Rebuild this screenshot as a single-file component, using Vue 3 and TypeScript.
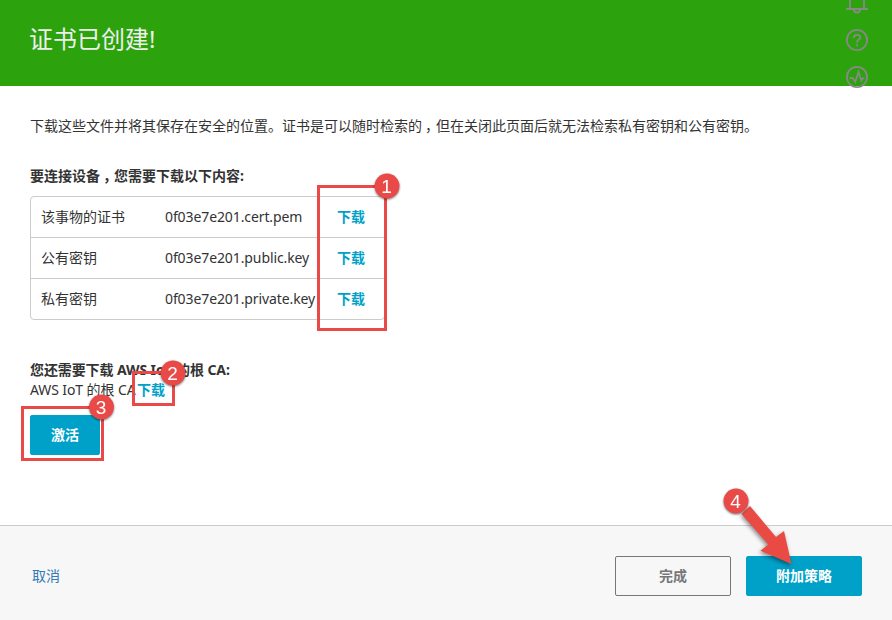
<script setup lang="ts">
interface CertFile {
  label: string
  name: string
}
interface Marker {
  n: number
  x: number
  y: number
}

const files: CertFile[] = [
  { label: '该事物的证书', name: '0f03e7e201.cert.pem' },
  { label: '公有密钥', name: '0f03e7e201.public.key' },
  { label: '私有密钥', name: '0f03e7e201.private.key' },
]

const markers: Marker[] = [
  { n: 1, x: 387, y: 186 },
  { n: 2, x: 173, y: 373 },
  { n: 3, x: 101.5, y: 407 },
  { n: 4, x: 736, y: 501 },
]
</script>

<template>
  <div class="page">
    <header class="banner">
      <h1>证书已创建!</h1>
    </header>

    <main class="content">
      <p class="intro">下载这些文件并将其保存在安全的位置。证书是可以随时检索的<span class="comma">，</span>但在关闭此页面后就无法检索私有密钥和公有密钥。</p>
      <h2 class="heading">要连接设备<span class="comma">，</span>您需要下载以下内容:</h2>
      <div class="files">
        <div v-for="file in files" :key="file.name" class="row">
          <span>{{ file.label }}</span>
          <span class="name">{{ file.name }}</span>
          <a class="link">下载</a>
        </div>
      </div>
      <h2 class="heading root-heading">您还需要下载 AWS IoT 的根 CA:</h2>
      <div class="root-line"><span class="root-name">AWS IoT 的根 CA</span><a class="link">下载</a></div>
      <button class="btn primary activate">激活</button>
    </main>

    <footer class="footer">
      <a class="cancel">取消</a>
      <button class="btn outline">完成</button>
      <button class="btn primary">附加策略</button>
    </footer>

    <svg class="side-icons" width="24" height="90" viewBox="0 0 24 90" fill="none" stroke="#888" stroke-width="1.8">
      <path d="M5 0V8.5M19 0V8.5M1 9H23M9 9.5Q9 12.5 12 12.5Q15 12.5 15 9.5" />
      <circle cx="12" cy="40" r="10.1" />
      <path d="M8.7 38Q8.7 34.9 12 34.9Q15.3 34.9 15.3 37.4Q15.3 38.8 13.6 39.8Q12 40.8 12 42.8M12 44.2V46.2" />
      <circle cx="12" cy="77" r="10.1" />
      <path d="M4.6 78H7.6L10.3 82L13.5 72L16.3 80.5L17.5 78.3H19.5" />
    </svg>

    <svg class="notes" width="892" height="620" viewBox="0 0 892 620">
      <g class="frames">
        <rect x="318.5" y="186.5" width="67" height="143" />
        <rect x="133.5" y="372.5" width="40" height="32" />
        <rect x="22.5" y="407.5" width="80" height="52" />
      </g>
      <path class="arrow" d="M741.5 514L750 506L776 537L784 531L791.5 564L760.5 550.7L768.3 544.5Z" />
      <g v-for="m in markers" :key="m.n" class="marker">
        <circle :cx="m.x" :cy="m.y" r="12.4" />
        <text :x="m.x - 0.5" :y="m.y + 6.5">{{ m.n }}</text>
      </g>
    </svg>
  </div>
</template>

<style>
body {
  margin: 0;
}
</style>

<style scoped>
.page {
  position: relative;
  display: flex;
  flex-direction: column;
  width: 892px;
  height: 620px;
  overflow: hidden;
  background: #fff;
  color: #333;
  font: 14px/20px 'Noto Sans', 'Noto Sans CJK SC', sans-serif;
}
.banner {
  height: 86px;
  box-sizing: border-box;
  padding: 24px 29px;
  background: #2ca20c;
}
h1 {
  margin: 0;
  color: #eee;
  font-size: 24px;
  font-weight: 400;
  line-height: 30px;
}
.content {
  flex: 1;
  padding: 30px 30px 0;
}
.intro {
  margin: 0 0 30px;
  white-space: nowrap;
}
.comma {
  display: inline-block;
  width: 14px;
  box-sizing: border-box;
  padding-left: 3px;
  line-height: 1;
}
.heading {
  margin: 0;
  font-size: 14px;
  font-weight: 700;
  line-height: 20px;
}
.files {
  width: 353px;
  margin-top: 10px;
  border: 1px solid #ccc;
  border-radius: 4px;
}
.row {
  display: grid;
  grid-template-columns: 124px 172px auto;
  height: 40px;
  padding-left: 10px;
  line-height: 40px;
  white-space: nowrap;
}
.row + .row {
  border-top: 1px solid #ccc;
}
.name {
  letter-spacing: -0.1px;
}
.link {
  color: #00a1c9;
  font-weight: 700;
}
.root-heading {
  margin-top: 40px;
  letter-spacing: -0.1px;
}
.root-line {
  display: flex;
}
.root-name {
  width: 107px;
  letter-spacing: -0.1px;
  white-space: nowrap;
}
.btn {
  width: 116px;
  height: 40px;
  padding: 0;
  border: 1px solid #00a1c9;
  border-radius: 2px;
  font: inherit;
  font-weight: 700;
}
.primary {
  background: #00a1c9;
  color: #fff;
}
.outline {
  border-color: #777;
  background: transparent;
  color: #777;
}
.activate {
  display: block;
  width: 70px;
  margin-top: 15px;
}
.footer {
  display: flex;
  align-items: center;
  gap: 15px;
  height: 95px;
  box-sizing: border-box;
  padding: 6px 30px 0 32px;
  border-top: 1px solid #ccc;
  background: #f7f7f7;
}
.cancel {
  margin-right: auto;
  color: #337ab7;
}
.side-icons {
  position: absolute;
  top: 0;
  left: 845px;
}
.notes {
  position: absolute;
  top: 0;
  left: 0;
}
.frames rect {
  fill: none;
  stroke: #ea4a47;
  stroke-width: 3;
}
.arrow {
  fill: #ea4a44;
  filter: drop-shadow(-1px 2px 2px rgb(0 0 0 / 45%));
}
.marker {
  filter: drop-shadow(0 1px 1px rgb(0 0 0 / 55%));
}
.marker circle {
  fill: #ea4a47;
}
.marker text {
  fill: #fff;
  font: 19px 'Liberation Sans', sans-serif;
  text-anchor: middle;
}
</style>
